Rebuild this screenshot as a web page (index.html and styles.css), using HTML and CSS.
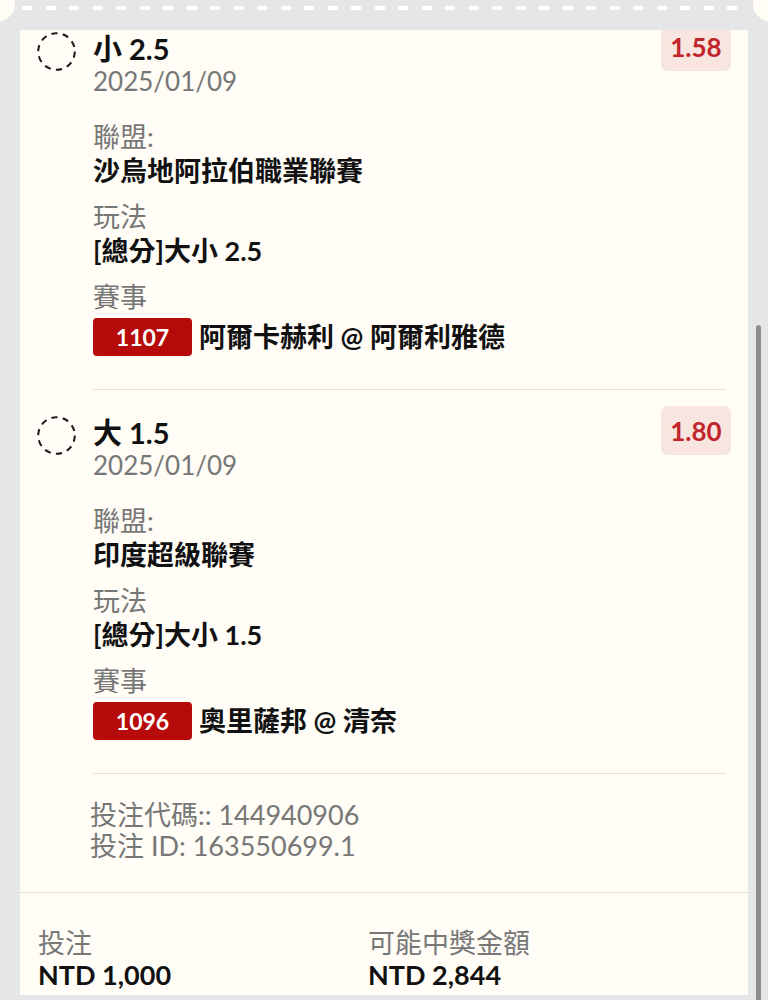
FILE: index.html
```html
<!DOCTYPE html>
<html lang="zh-Hant">
<head>
    <meta charset="UTF-8">
    <meta name="viewport" content="width=device-width, initial-scale=1.0">
    <title>投注單</title>
    <link rel="stylesheet" href="styles.css">
</head>
<body>
    <div class="ticket-top">
        <span class="notch notch-left"></span>
        <span class="perforation"></span>
        <span class="notch notch-right"></span>
    </div>

    <div class="ticket">
        <div class="slip">
            <div class="slip-scroll">

                <div class="bet bet-first">
                    <svg class="bet-status" width="39" height="39" viewBox="0 0 39 39">
                        <circle cx="19.5" cy="19.5" r="18.3" fill="none" stroke="#1a1a1a" stroke-width="2" stroke-dasharray="6.2 5.3"/>
                    </svg>
                    <div class="bet-main">
                        <div class="bet-head">
                            <div class="bet-title">
                                <div class="bet-pick">小 2.5</div>
                                <div class="bet-date">2025/01/09</div>
                            </div>
                            <span class="odds">1.58</span>
                        </div>
                        <div class="field">
                            <div class="field-label">聯盟:</div>
                            <div class="field-value">沙烏地阿拉伯職業聯賽</div>
                        </div>
                        <div class="field">
                            <div class="field-label">玩法</div>
                            <div class="field-value">[總分]大小 2.5</div>
                        </div>
                        <div class="field">
                            <div class="field-label">賽事</div>
                            <div class="match">
                                <span class="match-no">1107</span>
                                <span class="field-value">阿爾卡赫利 @ 阿爾利雅德</span>
                            </div>
                        </div>
                    </div>
                </div>

                <div class="bet">
                    <svg class="bet-status" width="39" height="39" viewBox="0 0 39 39">
                        <circle cx="19.5" cy="19.5" r="18.3" fill="none" stroke="#1a1a1a" stroke-width="2" stroke-dasharray="6.2 5.3"/>
                    </svg>
                    <div class="bet-main">
                        <div class="bet-head">
                            <div class="bet-title">
                                <div class="bet-pick">大 1.5</div>
                                <div class="bet-date">2025/01/09</div>
                            </div>
                            <span class="odds">1.80</span>
                        </div>
                        <div class="field">
                            <div class="field-label">聯盟:</div>
                            <div class="field-value">印度超級聯賽</div>
                        </div>
                        <div class="field">
                            <div class="field-label">玩法</div>
                            <div class="field-value">[總分]大小 1.5</div>
                        </div>
                        <div class="field">
                            <div class="field-label">賽事</div>
                            <div class="match">
                                <span class="match-no">1096</span>
                                <span class="field-value">奧里薩邦 @ 清奈</span>
                            </div>
                        </div>
                    </div>
                </div>

                <div class="bet-meta">
                    <div>投注代碼:: 144940906</div>
                    <div>投注 ID: 163550699.1</div>
                </div>
            </div>

            <div class="slip-summary">
                <div>
                    <div class="summary-label">投注</div>
                    <div class="summary-value">NTD 1,000</div>
                </div>
                <div>
                    <div class="summary-label">可能中獎金額</div>
                    <div class="summary-value">NTD 2,844</div>
                </div>
            </div>
        </div>

        <div class="scroll-rail">
            <span class="scroll-thumb"></span>
        </div>
    </div>
</body>
</html>
```

FILE: styles.css
```css
body {
    margin: 0;
    height: 1000px;
    overflow: hidden;
    background-color: #e5e6e8;
    font-family: "Lato", "Noto Sans CJK TC", sans-serif;
    color: #111;
}

/* ticket edge with perforation */
.ticket-top {
    display: flex;
    height: 30px;
    overflow: hidden;
}

.notch {
    flex-shrink: 0;
    width: 34px;
    height: 34px;
    margin-top: -13px;
    border-radius: 50%;
    background-color: #fffdf6;
}

.notch-left {
    margin-left: -19px;
}

.notch-right {
    margin-right: -19px;
}

.perforation {
    flex: 1;
    height: 4px;
    margin: 6px 7px 0 7px;
    background: repeating-linear-gradient(90deg, #fff 0 10px, transparent 10px 23.5px);
}

.ticket {
    display: flex;
    height: 965px;
}

.slip {
    display: flex;
    flex-direction: column;
    width: 728px;
    margin-left: 20px;
    background-color: #fffdf6;
}

.slip-scroll {
    flex: 1;
    min-height: 0;
    overflow: hidden;
}

/* single bet */
.bet {
    display: flex;
    padding-left: 17px;
}

.bet-first {
    margin-top: -24px;
}

.bet-status {
    flex-shrink: 0;
    margin-top: 26px;
}

.bet-main {
    flex: 1;
    margin-left: 17px;
    margin-right: 22px;
    padding: 16px 0 33px 0;
    border-bottom: 1px solid #e4e2dc;
}

.bet-head {
    display: flex;
    justify-content: space-between;
    align-items: flex-start;
}

.bet-title {
    padding-top: 10px;
}

.bet-pick {
    font-size: 29px;
    font-weight: 700;
    line-height: 34px;
}

.bet-date {
    font-size: 26px;
    line-height: 30px;
    color: #777;
}

.odds {
    display: flex;
    justify-content: center;
    align-items: center;
    width: 70px;
    height: 49px;
    margin-right: -5px;
    border-radius: 7px;
    background-color: #f8e5df;
    color: #c0252c;
    font-size: 26px;
    font-weight: 700;
}

.field {
    margin-top: 12px;
}

.bet-head + .field {
    margin-top: 24px;
}

.field-label {
    font-size: 27px;
    line-height: 34px;
    color: #777;
}

.field-value {
    font-size: 27px;
    font-weight: 700;
    line-height: 34px;
}

.match {
    display: flex;
    align-items: center;
    gap: 7px;
    margin-top: 4px;
}

.match-no {
    display: flex;
    justify-content: center;
    align-items: center;
    width: 99px;
    height: 38px;
    border-radius: 4px;
    background-color: #b70a0a;
    color: #fff;
    font-size: 23px;
    font-weight: 700;
}

.bet-meta {
    padding: 25px 0 0 70px;
    font-size: 27px;
    line-height: 31px;
    color: #777;
}

/* totals */
.slip-summary {
    display: grid;
    grid-template-columns: 330px 1fr;
    padding: 34px 18px 4px 18px;
    border-top: 1px solid #e4e2dc;
}

.summary-label {
    font-size: 27px;
    line-height: 32px;
    color: #777;
}

.summary-value {
    font-size: 27px;
    font-weight: 700;
    line-height: 32px;
}

.scroll-rail {
    width: 20px;
}

.scroll-thumb {
    display: block;
    width: 5px;
    height: 700px;
    margin: 295px 0 0 8px;
    border-radius: 3px;
    background-color: #8e8e8e;
}
```
